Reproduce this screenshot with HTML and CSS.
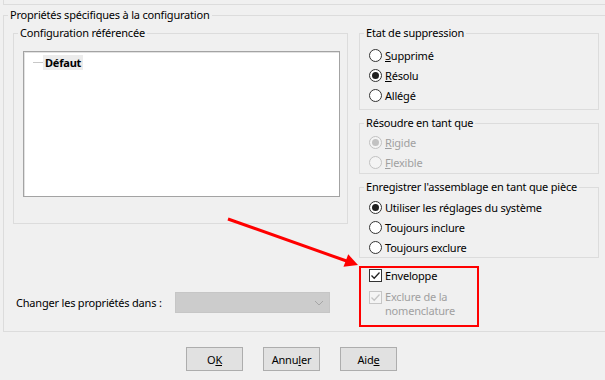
FILE: index.html
```html
<!DOCTYPE html>
<html lang="fr">
<head>
<meta charset="utf-8">
<title>Propriétés du composant</title>
<link rel="stylesheet" href="styles.css">
</head>
<body>
<div class="dialog">
  <div class="prev-group"></div>
  <fieldset class="group main">
    <legend>Propriétés spécifiques à la configuration</legend>
    <div class="main-grid">
      <div class="col-left">
        <fieldset class="group cfg">
          <legend>Configuration référencée</legend>
          <div class="listbox">
            <div class="tree-item"><span class="tree-line"></span><span class="tree-label">Défaut</span></div>
          </div>
        </fieldset>
        <div class="change-row">
          <span class="change-label">Changer les propriétés dans :</span>
          <div class="combo is-disabled">
            <svg class="chevron" width="10" height="6" viewBox="0 0 10 6"><polyline points="1,1 5,5 9,1" fill="none" stroke="#a6a6a6" stroke-width="1"/></svg>
          </div>
        </div>
      </div>
      <div class="col-right">
        <fieldset class="group etat">
          <legend>Etat de suppression</legend>
          <div class="opt"><span class="radio"></span><span><u>S</u>upprimé</span></div>
          <div class="opt"><span class="radio is-checked"></span><span><u>R</u>ésolu</span></div>
          <div class="opt"><span class="radio"></span><span>Allégé</span></div>
        </fieldset>
        <fieldset class="group resoudre">
          <legend>Résoudre en tant que</legend>
          <div class="opt is-disabled"><span class="radio is-checked"></span><span><u>R</u>igide</span></div>
          <div class="opt is-disabled"><span class="radio"></span><span><u>F</u>lexible</span></div>
        </fieldset>
        <fieldset class="group enreg">
          <legend>Enregistrer l'assemblage en tant que pièce</legend>
          <div class="opt"><span class="radio is-checked"></span><span>Utiliser les réglages du système</span></div>
          <div class="opt"><span class="radio"></span><span>Toujours inclure</span></div>
          <div class="opt"><span class="radio"></span><span>Toujours exclure</span></div>
        </fieldset>
        <div class="highlight-box">
          <div class="check-row">
            <span class="checkbox"><svg width="11" height="11" viewBox="0 0 11 11"><polyline points="1.5,5.5 4.2,8.3 9.5,2.5" fill="none" stroke="#222" stroke-width="1.3"/></svg></span>
            <span>Enveloppe</span>
          </div>
          <div class="check-row multi is-disabled">
            <span class="checkbox"><svg width="11" height="11" viewBox="0 0 11 11"><polyline points="1.5,5.5 4.2,8.3 9.5,2.5" fill="none" stroke="#c4c4c4" stroke-width="1.3"/></svg></span>
            <span>Exclure de la<br>nomenclature</span>
          </div>
        </div>
      </div>
    </div>
  </fieldset>
  <div class="buttons">
    <button class="btn">O<u>K</u></button>
    <button class="btn">Annu<u>l</u>er</button>
    <button class="btn">Aid<u>e</u></button>
  </div>
  <svg class="annotation" width="605" height="380" viewBox="0 0 605 380">
    <line x1="228" y1="219" x2="348" y2="261.5" stroke="#ff0000" stroke-width="3"/>
    <polygon points="358,265 343.5,266.8 348.2,254.2" fill="#ff0000"/>
  </svg>
</div>
</body>
</html>
```

FILE: styles.css
```css
* { box-sizing: border-box; }
html, body {
  margin: 0;
  padding: 0;
  overflow: hidden;
  background: #f0f0f0;
}
body {
  font-family: "Noto Sans", "DejaVu Sans", sans-serif;
  font-size: 11px;
  letter-spacing: -0.2px;
  color: #000;
}
.dialog {
  position: relative;
  width: 605px;
  height: 380px;
  overflow: hidden;
}
.prev-group {
  margin-left: 3px;
  height: 5px;
  border-left: 1px solid #dcdcdc;
  border-bottom: 1px solid #dcdcdc;
}
.group {
  margin: 0;
  padding: 0;
  border: 1px solid #dcdcdc;
  min-width: 0;
}
.group > legend {
  margin-left: 4px;
  padding: 0 2px;
  line-height: 16px;
  height: 16px;
}
.main {
  margin: 2px 0 0 3px;
  width: 620px;
  height: 325px;
  border-right-color: transparent;
}
.main-grid {
  display: grid;
  grid-template-columns: 335px 240px;
  column-gap: 11px;
  padding-left: 9px;
}
.cfg {
  margin-top: 2px;
  height: 199px;
}
.listbox {
  margin: 10px 0 0 9px;
  width: 317px;
  height: 146px;
  background: #fff;
  border: 1px solid #a3a3a3;
  box-shadow: inset 1px 1px 0 #e2e2e2;
  padding-top: 3px;
}
.tree-item {
  display: flex;
  align-items: center;
  height: 15px;
}
.tree-line {
  margin-left: 9px;
  width: 10px;
  border-top: 1px solid #c8c8c8;
}
.tree-label {
  font-weight: bold;
  background: #ececec;
  padding: 0 2px;
  line-height: 15px;
}
.change-row {
  display: flex;
  align-items: center;
  margin-top: 68px;
  padding-left: 3px;
}
.change-label {
  flex: none;
  width: 159px;
}
.combo {
  width: 155px;
  height: 21px;
  background: #cccccc;
  border: 1px solid #c6c6c6;
  display: flex;
  align-items: center;
  justify-content: flex-end;
  padding-right: 5px;
}
.col-right {
  display: flex;
  flex-direction: column;
}
.etat {
  margin-top: 2px;
  padding: 4px 0 4px 0;
}
.resoudre {
  margin-top: 5px;
  padding: 1px 0 1px 0;
}
.enreg {
  margin-top: 5px;
  padding: 2px 0 0 0;
}
.opt {
  display: flex;
  align-items: center;
  height: 20px;
  gap: 3px;
  margin-left: 9px;
}
.radio {
  flex: none;
  width: 13px;
  height: 13px;
  border: 1px solid #333;
  border-radius: 50%;
  background: #fff;
  display: flex;
  align-items: center;
  justify-content: center;
}
.radio.is-checked::after {
  content: "";
  width: 7px;
  height: 7px;
  border-radius: 50%;
  background: #1f1f1f;
}
.is-disabled { color: #a0a0a0; }
.opt.is-disabled .radio {
  border-color: #c2c2c2;
  background: #f4f4f4;
}
.opt.is-disabled .radio.is-checked::after { background: #c2c2c2; }
.highlight-box {
  margin-top: 8px;
  width: 120px;
  height: 61px;
  border: 2px solid #ff0000;
  padding: 0 0 0 8px;
}
.check-row {
  display: flex;
  align-items: center;
  gap: 3px;
  height: 14px;
}
.check-row.multi {
  margin-top: 8px;
  height: auto;
  align-items: flex-start;
  line-height: 14px;
}
.check-row.multi .checkbox { margin-top: 1px; }
.checkbox {
  flex: none;
  width: 13px;
  height: 13px;
  border: 1px solid #333;
  background: #fff;
  display: flex;
  align-items: center;
  justify-content: center;
}
.check-row.is-disabled .checkbox {
  border-color: #c6c6c6;
  background: #f4f4f4;
}
.buttons {
  display: flex;
  gap: 20px;
  margin-top: 15px;
  padding-left: 186px;
}
.btn {
  width: 57px;
  height: 24px;
  margin: 0;
  padding: 0;
  font: inherit;
  letter-spacing: inherit;
  color: #000;
  background: #e1e1e1;
  border: 1px solid #adadad;
}
.annotation {
  position: absolute;
  left: 0;
  top: 0;
  pointer-events: none;
}
```
